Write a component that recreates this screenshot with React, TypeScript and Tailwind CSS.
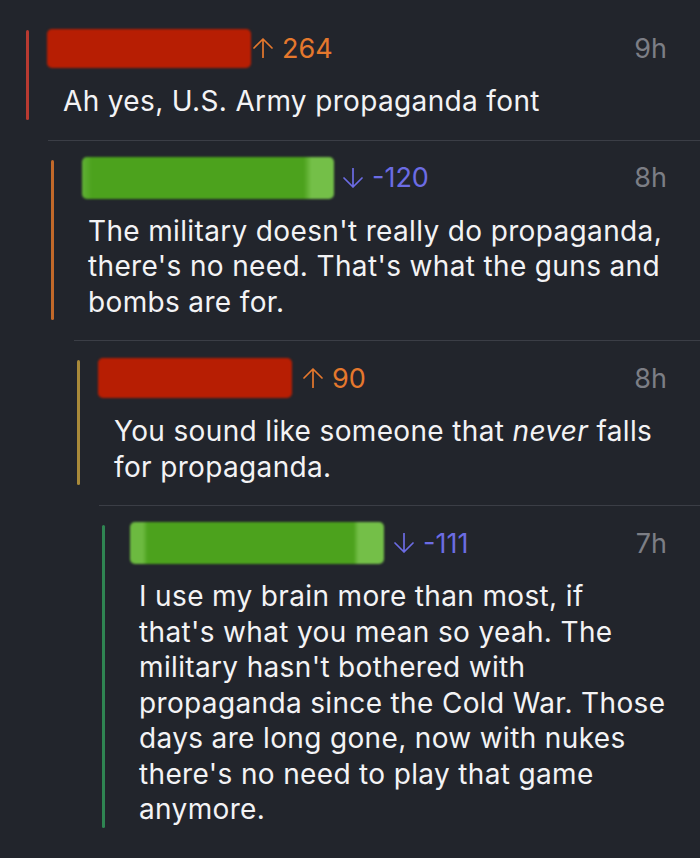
import { type FC, type ReactNode } from 'react';

type Vote = 'up' | 'down';

type CommentProps = {
  left: string;
  bar: string;
  blob: ReactNode;
  vote: Vote;
  score: string;
  gap: string;
  time: string;
  first?: boolean;
  children: ReactNode;
};

const Arrow: FC<{ dir: Vote }> = ({ dir }) => (
  <svg
    viewBox="0 0 20 20"
    className={dir === 'up' ? 'h-5 w-5 shrink-0 text-[#e5782d]' : 'h-5 w-5 shrink-0 text-[#6c6ce4]'}
    fill="none"
    stroke="currentColor"
    strokeWidth="1.7"
    strokeLinecap="round"
    strokeLinejoin="round"
  >
    {dir === 'up' ? (
      <path d="M10 19.5V1M1 10L10 1L19 10" />
    ) : (
      <path d="M10 0.5V19M1 10L10 19L19 10" />
    )}
  </svg>
);

const Comment: FC<CommentProps> = ({ left, bar, blob, vote, score, gap, time, first, children }) => (
  <div className={`${left} ${first ? 'pt-[30px]' : 'border-t border-[#3b3e46] pt-[19px]'} pb-[20px]`}>
    <div className="flex pl-[3px]">
      <div className={`w-[3px] shrink-0 rounded-full ${bar}`} />
      <div className="ml-[34px] flex-1 pr-[33px]">
        <div className="flex h-[36px] items-center">
          {blob}
          <span className={`flex items-center ${gap}`}>
            <Arrow dir={vote} />
            <span
              className={`ml-[9px] text-[27px] leading-none ${
                vote === 'up' ? 'text-[#e5782d]' : 'text-[#6c6ce4]'
              }`}
            >
              {score}
            </span>
          </span>
          <span className="ml-auto text-[27px] leading-none text-[#7c7e85]">{time}</span>
        </div>
        <p className="mt-[18px] text-[28px] leading-[35.5px] tracking-[0.35px] text-[#f3f3f5]">{children}</p>
      </div>
    </div>
  </div>
);

export default function App() {
  return (
    <div className="min-h-screen w-full overflow-hidden bg-[#22252c] font-['Inter',sans-serif]">
      <Comment
        first
        left="ml-[23px]"
        bar="bg-[#b93a31]"
        vote="up"
        score="264"
        gap="ml-[2px]"
        time="9h"
        blob={<span className="ml-[-16px] h-[39px] w-[204px] shrink-0 rounded-[5px] bg-[#b71e03] blur-[1.2px]" />}
      >
        Ah yes, U.S. Army propaganda font
      </Comment>
      <Comment
        left="ml-[48px]"
        bar="bg-[#c2692a]"
        vote="down"
        score="-120"
        gap="ml-[9px]"
        time="8h"
        blob={
          <span className="ml-[-6px] h-[42px] w-[252px] shrink-0 rounded-[5px] bg-[linear-gradient(90deg,#62b236_0%,#4ca21d_4%,#4ca21d_88%,#74bf48_91%,#74bf48_100%)] blur-[1.2px]" />
        }
      >
        The military doesn't really do propaganda,
        <br />
        there's no need. That's what the guns and
        <br />
        bombs are for.
      </Comment>
      <Comment
        left="ml-[74px]"
        bar="bg-[#a98a3a]"
        vote="up"
        score="90"
        gap="ml-[11px]"
        time="8h"
        blob={<span className="ml-[-16px] h-[40px] w-[194px] shrink-0 rounded-[5px] bg-[#b71e03] blur-[1.2px]" />}
      >
        You sound like someone that <em>never</em> falls
        <br />
        for propaganda.
      </Comment>
      <Comment
        left="ml-[99px]"
        bar="bg-[#2f8552]"
        vote="down"
        score="-111"
        gap="ml-[10px]"
        time="7h"
        blob={
          <span className="ml-[-9px] h-[42px] w-[254px] shrink-0 rounded-[5px] bg-[linear-gradient(90deg,#6cba40_0%,#6cba40_5%,#4ca21d_7%,#4ca21d_88%,#74bf48_90%,#74bf48_100%)] blur-[1.2px]" />
        }
      >
        I use my brain more than most, if
        <br />
        that's what you mean so yeah. The
        <br />
        military hasn't bothered with
        <br />
        propaganda since the Cold War. Those
        <br />
        days are long gone, now with nukes
        <br />
        there's no need to play that game
        <br />
        anymore.
      </Comment>
    </div>
  );
}
